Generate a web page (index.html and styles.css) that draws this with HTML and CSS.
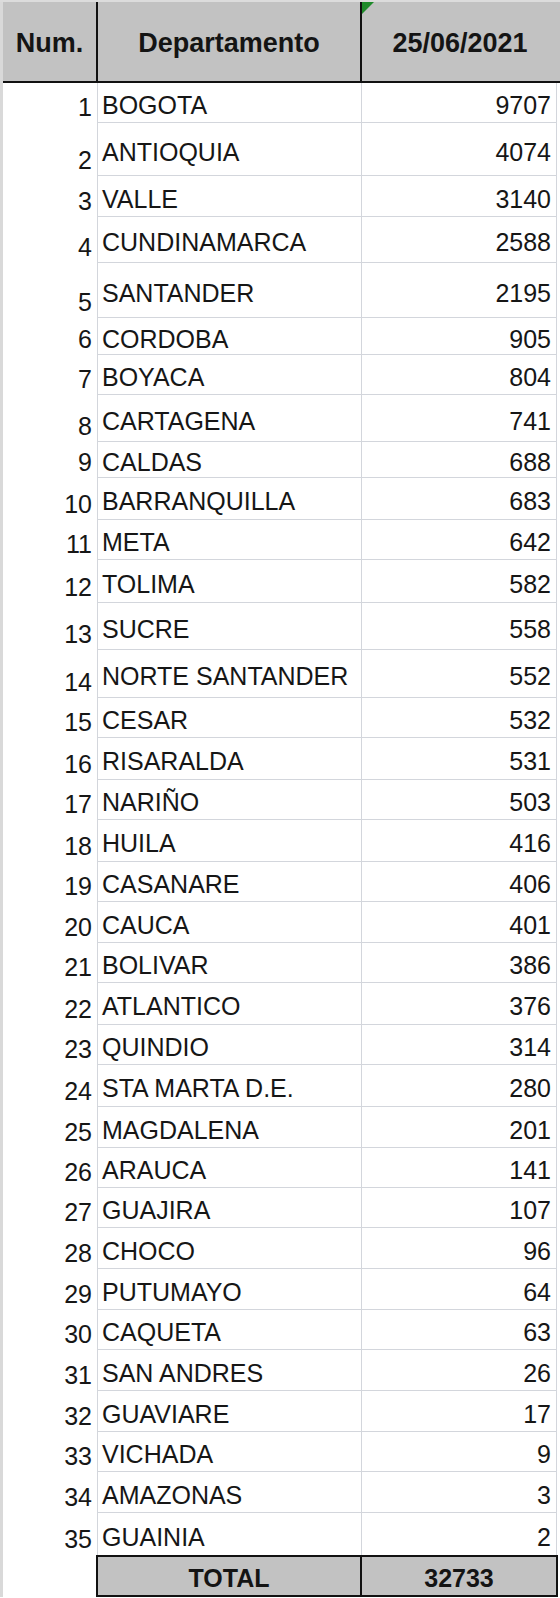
FILE: index.html
```html
<!DOCTYPE html>
<html lang="es">
<head>
<meta charset="utf-8">
<title>Departamento 25/06/2021</title>
<link rel="stylesheet" href="styles.css">
</head>
<body>
<div class="sheet">
  <div class="head">
    <div class="hcell hnum">Num.</div>
    <div class="hcell hdep">Departamento</div>
    <div class="hcell hval">25/06/2021<span class="flag"></span></div>
  </div>
  <div class="row h40"><div class="num">1</div><div class="dep">BOGOTA</div><div class="val">9707</div></div>
  <div class="row h53"><div class="num">2</div><div class="dep">ANTIOQUIA</div><div class="val">4074</div></div>
  <div class="row h41"><div class="num">3</div><div class="dep">VALLE</div><div class="val">3140</div></div>
  <div class="row h46"><div class="num">4</div><div class="dep">CUNDINAMARCA</div><div class="val">2588</div></div>
  <div class="row h55"><div class="num">5</div><div class="dep">SANTANDER</div><div class="val">2195</div></div>
  <div class="row h37"><div class="num">6</div><div class="dep">CORDOBA</div><div class="val">905</div></div>
  <div class="row h40"><div class="num">7</div><div class="dep">BOYACA</div><div class="val">804</div></div>
  <div class="row h47"><div class="num">8</div><div class="dep">CARTAGENA</div><div class="val">741</div></div>
  <div class="row h36"><div class="num">9</div><div class="dep">CALDAS</div><div class="val">688</div></div>
  <div class="row h42"><div class="num">10</div><div class="dep">BARRANQUILLA</div><div class="val">683</div></div>
  <div class="row h40"><div class="num">11</div><div class="dep">META</div><div class="val">642</div></div>
  <div class="row h43"><div class="num">12</div><div class="dep">TOLIMA</div><div class="val">582</div></div>
  <div class="row h47"><div class="num">13</div><div class="dep">SUCRE</div><div class="val">558</div></div>
  <div class="row h48"><div class="num">14</div><div class="dep">NORTE SANTANDER</div><div class="val">552</div></div>
  <div class="row h40"><div class="num">15</div><div class="dep">CESAR</div><div class="val">532</div></div>
  <div class="row h42"><div class="num">16</div><div class="dep">RISARALDA</div><div class="val">531</div></div>
  <div class="row h40"><div class="num">17</div><div class="dep">NARIÑO</div><div class="val">503</div></div>
  <div class="row h42"><div class="num">18</div><div class="dep">HUILA</div><div class="val">416</div></div>
  <div class="row h40"><div class="num">19</div><div class="dep">CASANARE</div><div class="val">406</div></div>
  <div class="row h41"><div class="num">20</div><div class="dep">CAUCA</div><div class="val">401</div></div>
  <div class="row h40"><div class="num">21</div><div class="dep">BOLIVAR</div><div class="val">386</div></div>
  <div class="row h42"><div class="num">22</div><div class="dep">ATLANTICO</div><div class="val">376</div></div>
  <div class="row h40"><div class="num">23</div><div class="dep">QUINDIO</div><div class="val">314</div></div>
  <div class="row h42"><div class="num">24</div><div class="dep">STA MARTA D.E.</div><div class="val">280</div></div>
  <div class="row h41"><div class="num">25</div><div class="dep">MAGDALENA</div><div class="val">201</div></div>
  <div class="row h40"><div class="num">26</div><div class="dep">ARAUCA</div><div class="val">141</div></div>
  <div class="row h40"><div class="num">27</div><div class="dep">GUAJIRA</div><div class="val">107</div></div>
  <div class="row h41"><div class="num">28</div><div class="dep">CHOCO</div><div class="val">96</div></div>
  <div class="row h41"><div class="num">29</div><div class="dep">PUTUMAYO</div><div class="val">64</div></div>
  <div class="row h40"><div class="num">30</div><div class="dep">CAQUETA</div><div class="val">63</div></div>
  <div class="row h41"><div class="num">31</div><div class="dep">SAN ANDRES</div><div class="val">26</div></div>
  <div class="row h41"><div class="num">32</div><div class="dep">GUAVIARE</div><div class="val">17</div></div>
  <div class="row h40"><div class="num">33</div><div class="dep">VICHADA</div><div class="val">9</div></div>
  <div class="row h41"><div class="num">34</div><div class="dep">AMAZONAS</div><div class="val">3</div></div>
  <div class="row h42 last"><div class="num">35</div><div class="dep">GUAINIA</div><div class="val">2</div></div>
  <div class="total">
    <div class="tblank"></div>
    <div class="tbox">
      <div class="tlabel">TOTAL</div>
      <div class="tval">32733</div>
    </div>
  </div>
</div>
</body>
</html>
```

FILE: styles.css
```css
html, body {
  margin: 0;
  padding: 0;
  background: #ffffff;
}

body {
  width: 560px;
  height: 1598px;
  overflow: hidden;
  font-family: "Liberation Sans", Arial, sans-serif;
  color: #161616;
}

.sheet {
  width: 557px;
  padding-left: 3px;
  border-top: 2px solid #dcdcdc;
  background: linear-gradient(to right, #d9d9d9 0, #d9d9d9 3px, #ffffff 3px);
}

/* header */
.head {
  display: grid;
  grid-template-columns: 93px 264px 198px;
  height: 79px;
  background: #c2c2c2;
  border-bottom: 2px solid #111111;
}

.hcell {
  display: flex;
  align-items: center;
  justify-content: center;
  padding-top: 3px;
  font-weight: bold;
  font-size: 27px;
  line-height: 27px;
  color: #141414;
}

.hdep,
.hval {
  border-left: 2px solid #111111;
}

.hval {
  position: relative;
}

.flag {
  position: absolute;
  left: 0;
  top: 0;
  width: 0;
  height: 0;
  border-top: 12px solid #1f8a2a;
  border-right: 12px solid transparent;
}

/* body rows */
.row {
  display: grid;
  grid-template-columns: 94px 264px 196px;
  font-size: 25px;
  line-height: 24px;
}

.num {
  display: flex;
  align-items: flex-end;
  justify-content: flex-end;
  padding-right: 5px;
  padding-bottom: 4px;
  background: #ffffff;
}

.dep,
.val {
  display: flex;
  align-items: center;
  padding-top: 5px;
  border-left: 1px solid #d3d6dc;
  border-bottom: 1px solid #d3d6dc;
}

.dep {
  padding-left: 4px;
}

.val {
  justify-content: flex-end;
  padding-right: 5px;
  border-right: 1px solid #d3d6dc;
}

.row.last .dep,
.row.last .val {
  border-bottom: none;
}

.h36 { height: 36px; }
.h37 { height: 37px; }
.h40 { height: 40px; }
.h41 { height: 41px; }
.h42 { height: 42px; }
.h43 { height: 43px; }
.h46 { height: 46px; }
.h47 { height: 47px; }
.h48 { height: 48px; }
.h53 { height: 53px; }
.h55 { height: 55px; }

/* total row */
.total {
  display: grid;
  grid-template-columns: 93px 462px;
  height: 42px;
}

.tblank {
  background: #ffffff;
}

.tbox {
  display: grid;
  grid-template-columns: 262px 196px;
  background: #c2c2c2;
  border: 2px solid #111111;
  font-weight: bold;
  font-size: 25px;
  line-height: 24px;
  color: #141414;
}

.tlabel,
.tval {
  display: flex;
  align-items: center;
  justify-content: center;
  padding-top: 3px;
}

.tval {
  border-left: 2px solid #111111;
}
```
